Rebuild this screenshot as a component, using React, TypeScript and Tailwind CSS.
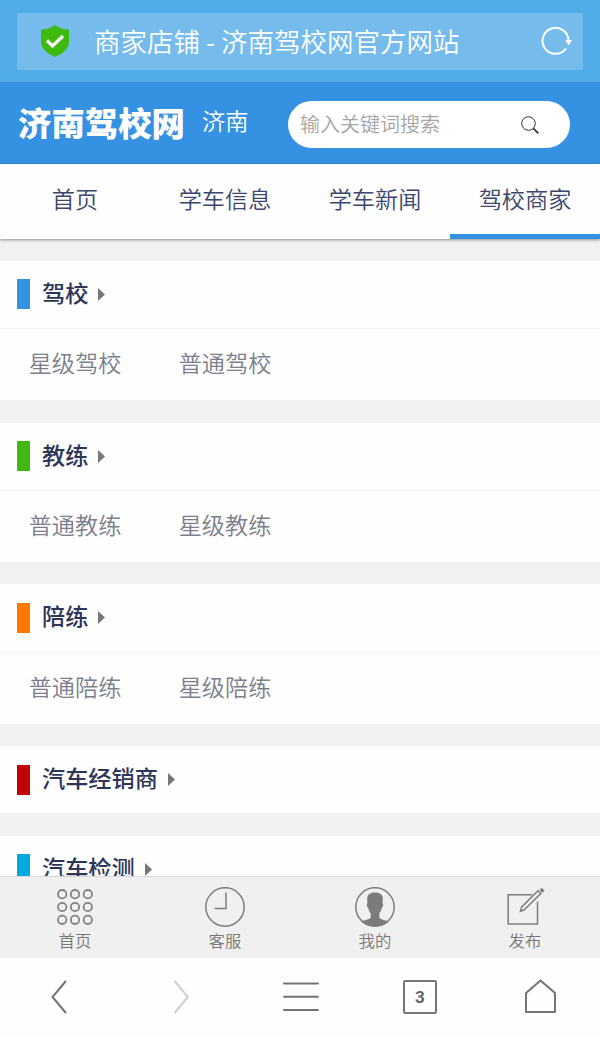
import type { ReactNode } from "react";

const tabs = ["首页", "学车信息", "学车新闻", "驾校商家"];

const categories = [
  { title: "驾校", color: "bg-[#3591e2]", items: ["星级驾校", "普通驾校"] },
  { title: "教练", color: "bg-[#41b714]", items: ["普通教练", "星级教练"] },
  { title: "陪练", color: "bg-[#ff7800]", items: ["普通陪练", "星级陪练"] },
  { title: "汽车经销商", color: "bg-[#c10000]", items: [] },
  { title: "汽车检测", color: "bg-[#00a9df]", items: [] },
];

function ShieldIcon() {
  return (
    <svg className="-mt-[2px] ml-[23px] h-[34px] w-[30px]" viewBox="0 0 30 34">
      <path
        d="M15 1C11 4 6 5.500 1 5.500V17c0 7.500 6 12.500 14 16 8-3.500 14-8.500 14-16V5.500C24 5.500 19 4 15 1Z"
        fill="#3cbb0c"
      />
      <path d="m7 16.500 5.500 5.500 10.500-10" fill="none" stroke="#fff" strokeWidth="3.300" />
    </svg>
  );
}

function ReloadIcon() {
  return (
    <svg className="mr-[11px] ml-auto h-8 w-8 overflow-visible" viewBox="0 0 32 32" fill="none">
      <path d="M26 22.500A13 13 0 1 1 28.500 15" stroke="#fff" strokeWidth="2" />
      <path d="m25.300 14 3.400 5.500 3.400-5.500Z" fill="#fff" />
    </svg>
  );
}

function SearchIcon() {
  return (
    <svg className="mr-[30px] ml-auto h-5 w-5" viewBox="0 0 20 20" fill="none" stroke="#333">
      <circle cx="8.500" cy="8.500" r="6.800" strokeWidth="1" />
      <path d="m13.300 13.300 5 5" strokeWidth="1.800" />
    </svg>
  );
}

function GridIcon() {
  return (
    <svg className="h-10 w-10" viewBox="0 0 40 40" fill="none" stroke="#828282" strokeWidth="1.800">
      {[7.2, 20, 32.8].map((y) =>
        [7.2, 20, 32.8].map((x) => <circle key={`${x}-${y}`} cx={x} cy={y} r="4.200" />),
      )}
    </svg>
  );
}

function ClockIcon() {
  return (
    <svg className="h-10 w-10" viewBox="0 0 40 40" fill="none" stroke="#7d7d7d" strokeWidth="1.500">
      <circle cx="20" cy="20" r="19.200" />
      <path d="M21 5.500V21.500H9.500" />
    </svg>
  );
}

function UserIcon() {
  return (
    <svg className="h-10 w-10" viewBox="0 0 40 40">
      <circle cx="20" cy="20" r="19.200" fill="none" stroke="#7d7d7d" strokeWidth="1.500" />
      <path
        d="M20 5.500c-5.500 0-8 2.300-7.800 7l.2 4c-1 0-.7 3.500.7 4 .6 3 1.300 4.200 2.600 5.800v4c-1 2.500-5.700 2.900-9.700 4.200C10 38 15 39.500 20 39.500s10-1.500 14-5c-4-1.300-8.700-1.700-9.700-4.200v-4c1.300-1.600 2-2.800 2.600-5.800 1.400-.5 1.700-4 .7-4l.2-4c.2-4.700-2.300-7-7.800-7Z"
        fill="#7b7b7b"
      />
    </svg>
  );
}

function EditIcon() {
  return (
    <svg className="h-10 w-10" viewBox="0 0 40 40" fill="none" stroke="#7d7d7d" strokeWidth="1.500">
      <path d="M27 7.700H3.200v29.300h29.300V14.500" />
      <path d="m33 3.800 2.800 2.800L19.200 22.800l-3.700 1.400 1-4Z" />
      <path d="m35.600 1.900 2.900 2.900" strokeWidth="3" />
    </svg>
  );
}

function Category({ title, color, items }: (typeof categories)[number]) {
  return (
    <section className="mb-[22.400px] bg-[#fefefe]">
      <h2 className="flex h-[67.300px] items-center pl-[17px] text-[23.200px] leading-none font-medium text-[#2d3558]">
        <span className={`mr-3 h-[30px] w-[13px] ${color}`} />
        <span className="pb-[4px]">{title}</span>
        <svg className="ml-[10px] h-[13px] w-[7px]" viewBox="0 0 7 13" fill="#777">
          <path d="M0 0 7 6.500 0 13Z" />
        </svg>
      </h2>
      {items.length > 0 && (
        <ul className="grid h-[72.100px] grid-cols-4 items-center border-t border-[#f2f2f2] pb-[4px] text-center text-[23.200px] leading-none text-[#7c7e8b]">
          {items.map((item) => (
            <li key={item}>{item}</li>
          ))}
        </ul>
      )}
    </section>
  );
}

function DockItem({ label, children }: { label: string; children: ReactNode }) {
  return (
    <a className="flex flex-col items-center pt-[10px]">
      {children}
      <span className="mt-[4px] text-[16.400px] leading-[18px]">{label}</span>
    </a>
  );
}

export default function App() {
  return (
    <div className="flex h-[1037px] w-[600px] flex-col overflow-hidden bg-[#f1f1f1] font-['Noto_Sans_CJK_SC',sans-serif] font-[350]">
      <div className="h-[82px] shrink-0 bg-[#50abe6] px-[17px] pt-[13px]">
        <div className="flex h-[57px] items-center rounded-[2px] bg-[#75bbec] text-white">
          <ShieldIcon />
          <span className="ml-[24px] text-[26.500px] leading-none whitespace-nowrap">
            商家店铺 - 济南驾校网官方网站
          </span>
          <ReloadIcon />
        </div>
      </div>

      <header className="flex h-[82px] shrink-0 items-center bg-[#3591e2] text-white">
        <h1 className="ml-[18px] pb-[3px] text-[33.400px] leading-none font-black whitespace-nowrap">
          济南驾校网
        </h1>
        <span className="ml-[17px] pb-[4px] text-[23.200px] leading-none">济南</span>
        <div className="mt-[3px] mr-[30px] ml-auto flex h-[47px] w-[282px] items-center rounded-full bg-white pl-3 text-[20px] leading-none text-[#a5a5a5]">
          <span className="pb-[2px]">输入关键词搜索</span>
          <SearchIcon />
        </div>
      </header>

      <nav className="z-10 grid h-[75.400px] shrink-0 grid-cols-4 bg-[#fefefe] text-center text-[23.200px] text-[#3a466c] shadow-[0_1px_3px_rgba(0,0,0,0.4)]">
        {tabs.map((tab) => (
          <a
            key={tab}
            className={`pt-[16px] leading-[36px] ${tab === "驾校商家" ? "border-b-[5px] border-[#3591e2]" : ""}`}
          >
            {tab}
          </a>
        ))}
      </nav>

      <main className="min-h-0 flex-1 overflow-hidden pt-[21.400px]">
        {categories.map((category) => (
          <Category key={category.title} {...category} />
        ))}
      </main>

      <div className="grid h-[82px] shrink-0 grid-cols-4 border-t border-[#d8d8d8] bg-[#f0f0f0] text-[#777]">
        <DockItem label="首页">
          <GridIcon />
        </DockItem>
        <DockItem label="客服">
          <ClockIcon />
        </DockItem>
        <DockItem label="我的">
          <UserIcon />
        </DockItem>
        <DockItem label="发布">
          <EditIcon />
        </DockItem>
      </div>

      <footer className="grid h-[79px] shrink-0 grid-cols-5 justify-items-center bg-[#fefefe] pt-[19px] text-[#747474]">
        <svg className="h-10 w-10" viewBox="0 0 40 40" fill="none" stroke="currentColor" strokeWidth="2" strokeLinecap="round">
          <path d="M25.500 4.500 12.500 20l13 15.500" />
        </svg>
        <svg className="h-10 w-10" viewBox="0 0 40 40" fill="none" stroke="#cfcfcf" strokeWidth="2" strokeLinecap="round">
          <path d="m15 4.500 12.800 15.500L15 35.500" />
        </svg>
        <svg className="h-10 w-10" viewBox="0 0 40 40" fill="none" stroke="currentColor" strokeWidth="2" strokeLinecap="round">
          <path d="M4 6.500H38M4 19.700H38M4 33H38" />
        </svg>
        <div className="mt-[3px] flex h-[34px] w-[34px] items-center justify-center rounded-[2px] border-2 border-[#777] font-[Roboto] text-[17px] leading-none font-bold text-[#666]">
          3
        </div>
        <svg className="h-10 w-10" viewBox="0 0 40 40" fill="none" stroke="currentColor" strokeWidth="2">
          <path d="M6 16 20.500 3.500 35 16V35H6Z" strokeLinejoin="round" />
        </svg>
      </footer>
    </div>
  );
}
